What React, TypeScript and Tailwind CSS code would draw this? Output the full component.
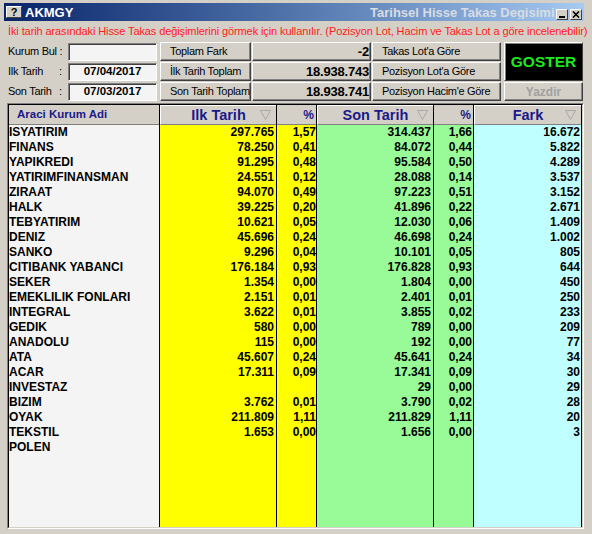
import React from "react";

type Row = [string, string, string, string, string, string];

const rows: Row[] = [
  ["ISYATIRIM", "297.765", "1,57", "314.437", "1,66", "16.672"],
  ["FINANS", "78.250", "0,41", "84.072", "0,44", "5.822"],
  ["YAPIKREDI", "91.295", "0,48", "95.584", "0,50", "4.289"],
  ["YATIRIMFINANSMAN", "24.551", "0,12", "28.088", "0,14", "3.537"],
  ["ZIRAAT", "94.070", "0,49", "97.223", "0,51", "3.152"],
  ["HALK", "39.225", "0,20", "41.896", "0,22", "2.671"],
  ["TEBYATIRIM", "10.621", "0,05", "12.030", "0,06", "1.409"],
  ["DENIZ", "45.696", "0,24", "46.698", "0,24", "1.002"],
  ["SANKO", "9.296", "0,04", "10.101", "0,05", "805"],
  ["CITIBANK YABANCI", "176.184", "0,93", "176.828", "0,93", "644"],
  ["SEKER", "1.354", "0,00", "1.804", "0,00", "450"],
  ["EMEKLILIK FONLARI", "2.151", "0,01", "2.401", "0,01", "250"],
  ["INTEGRAL", "3.622", "0,01", "3.855", "0,02", "233"],
  ["GEDIK", "580", "0,00", "789", "0,00", "209"],
  ["ANADOLU", "115", "0,00", "192", "0,00", "77"],
  ["ATA", "45.607", "0,24", "45.641", "0,24", "34"],
  ["ACAR", "17.311", "0,09", "17.341", "0,09", "30"],
  ["INVESTAZ", "", "", "29", "0,00", "29"],
  ["BIZIM", "3.762", "0,01", "3.790", "0,02", "28"],
  ["OYAK", "211.809", "1,11", "211.829", "1,11", "20"],
  ["TEKSTIL", "1.653", "0,00", "1.656", "0,00", "3"],
  ["POLEN", "", "", "", "", ""],
];

const raised =
  "border border-t-white border-l-white border-b-[#404040] border-r-[#404040] shadow-[inset_-1px_-1px_0_#808080]";
const sunken =
  "border border-t-[#808080] border-l-[#808080] border-b-white border-r-white shadow-[inset_1px_1px_0_#404040]";

function SortArrow() {
  return (
    <svg width="11" height="10" viewBox="0 0 11 10" className="shrink-0">
      <path d="M0.5 0.5 H10.5 L5.5 9.5 Z" fill="none" stroke="#a8a8a8" strokeWidth="1" />
    </svg>
  );
}

function SortHeader({ label }: { label: string }) {
  return (
    <div className="h-[20px] flex items-center border-t border-l border-white border-b border-b-[#808080] bg-[#d4d0c8] relative">
      <span className="flex-1 text-center text-[14.5px] font-bold text-[#1a1a8a] leading-none">{label}</span>
      <span className="absolute right-[5px] top-[4px]">
        <SortArrow />
      </span>
    </div>
  );
}

function PctHeader() {
  return (
    <div className="h-[20px] flex items-center justify-end pr-[2px] bg-[#d4d0c8] border-b border-b-[#808080]">
      <span className="text-[12px] font-bold text-[#1a1a8a]">%</span>
    </div>
  );
}

function Col({
  width,
  bg,
  header,
  idx,
  pr,
  left,
}: {
  width: string;
  bg: string;
  header: React.ReactNode;
  idx: number;
  pr: string;
  left?: boolean;
}) {
  return (
    <div className={`${width} flex flex-col border-r border-black`}>
      {header}
      <div className={`flex-1 ${bg}`}>
        {rows.map((r, i) => (
          <div
            key={i}
            className={`h-[15px] leading-[15px] text-[12px] font-bold whitespace-nowrap overflow-hidden ${left ? "text-left" : `text-right ${pr}`}`}
          >
            {r[idx]}
          </div>
        ))}
      </div>
    </div>
  );
}

export default function App() {
  return (
    <div className="w-[592px] h-[534px] bg-[#d4d0c8] font-['Liberation_Sans',Arial,sans-serif] text-black flex flex-col pl-[4px] pr-[8px] pt-[3px] pb-[5px] overflow-hidden">
      {/* title bar */}
      <div className="h-[18px] flex items-center bg-linear-to-r from-[#0a246a] to-[#a6caf0] pl-[2px] pr-[2px]">
        <div className="w-[16px] h-[12px] bg-[#d4d0c8] border border-t-white border-l-white border-b-[#404040] border-r-[#404040] flex items-center justify-center text-[11px] font-bold leading-none">
          ?
        </div>
        <span className="ml-[3px] text-white text-[13px] font-bold leading-none">AKMGY</span>
        <div className="flex-1" />
        <div className="w-[186px] overflow-hidden whitespace-nowrap text-[13px] font-bold text-[#d8dce4] leading-none">
          Tarihsel Hisse Takas Degisimi
        </div>
        <div className="flex gap-[2px] self-end mb-[1px]">
          <div className="w-[12px] h-[11px] bg-[#d4d0c8] border border-t-white border-l-white border-b-[#404040] border-r-[#404040] flex items-end justify-center pb-[1px]">
            <div className="w-[6px] h-[2px] bg-black" />
          </div>
          <div className="w-[12px] h-[11px] bg-[#d4d0c8] border border-t-white border-l-white border-b-[#404040] border-r-[#404040] flex items-center justify-center">
            <svg width="8" height="7" viewBox="0 0 8 7">
              <path d="M1 0.5 L7 6.5 M7 0.5 L1 6.5" stroke="black" strokeWidth="1.6" />
            </svg>
          </div>
        </div>
      </div>

      {/* info text */}
      <div className="h-[20px] flex items-center pl-[4px] text-[11px] text-[#ff1a1a] whitespace-nowrap tracking-[-0.1px]">
        İki tarih arasındaki Hisse Takas değişimlerini görmek için kullanılır. (Pozisyon Lot, Hacim ve Takas Lot a göre incelenebilir)
      </div>

      {/* controls */}
      <div className="mt-[1px] flex h-[60px] text-[11px] tracking-[-0.3px]">
        <div className="w-[64px] pl-[4px] flex flex-col gap-[1px]">
          <div className="h-[19px] flex items-center">Kurum Bul :</div>
          <div className="h-[19px] flex items-center">
            <span className="w-[51px]">Ilk Tarih</span>:
          </div>
          <div className="h-[19px] flex items-center">
            <span className="w-[51px]">Son Tarih</span>:
          </div>
        </div>
        <div className="w-[89px] flex flex-col gap-[2px] pt-[1px]">
          <div className={`h-[18px] bg-[#f4f4f4] ${sunken}`} />
          <div className={`h-[18px] bg-[#f4f4f4] ${sunken} flex items-center justify-center text-[11.5px] font-bold tracking-normal`}>
            07/04/2017
          </div>
          <div className={`h-[18px] bg-[#f4f4f4] ${sunken} flex items-center justify-center text-[11.5px] font-bold tracking-normal`}>
            07/03/2017
          </div>
        </div>
        <div className="w-[91px] ml-[3px] flex flex-col gap-[1px]">
          {["Toplam Fark", "İlk Tarih Toplam", "Son Tarih Toplam"].map((t) => (
            <div key={t} className={`h-[19px] ${raised} flex items-center pl-[9px] whitespace-nowrap overflow-hidden`}>
              {t}
            </div>
          ))}
        </div>
        <div className="w-[119px] ml-[1px] flex flex-col gap-[1px]">
          {["-2", "18.938.743", "18.938.741"].map((t) => (
            <div key={t} className={`h-[19px] ${raised} flex items-center justify-end pr-[1px] text-[13px] font-bold tracking-[-0.2px]`}>
              {t}
            </div>
          ))}
        </div>
        <div className="w-[129px] ml-[1px] flex flex-col gap-[1px]">
          {["Takas Lot'a Göre", "Pozisyon Lot'a Göre", "Pozisyon Hacim'e Göre"].map((t) => (
            <div key={t} className={`h-[19px] ${raised} flex items-center pl-[9px] whitespace-nowrap`}>
              {t}
            </div>
          ))}
        </div>
        <div className="w-[79px] ml-[3px] flex flex-col gap-[1px]">
          <div className="h-[39px] bg-black border border-t-white border-l-white border-b-[#404040] border-r-[#404040] shadow-[inset_1px_1px_0_#808080] flex items-center justify-center">
            <span className="text-[15.5px] font-bold text-[#1ee81e] tracking-normal">GOSTER</span>
          </div>
          <div className={`h-[19px] ${raised} flex items-center justify-center`}>
            <span className="text-[12px] font-bold text-[#a0a0a0] tracking-normal">Yazdir</span>
          </div>
        </div>
      </div>

      {/* grid */}
      <div className="mt-[1px] ml-[3px] flex-1 border border-t-[#808080] border-l-[#808080] border-b-white border-r-white flex flex-col">
        <div className="flex-1 border border-t-black border-l-black border-b-[#d4d0c8] border-r-[#d4d0c8] flex">
          <Col
            width="w-[151px]"
            bg="bg-[#f4f4f4]"
            idx={0}
            pr=""
            left
            header={
              <div className="h-[20px] flex items-center pl-[8px] bg-[#d4d0c8] border-b border-b-[#808080]">
                <span className="text-[11.5px] font-bold text-[#1a1a8a]">Araci Kurum Adi</span>
              </div>
            }
          />
          <Col width="w-[117px]" bg="bg-[#ffff00]" idx={1} pr="pr-[2px]" header={<SortHeader label="Ilk Tarih" />} />
          <Col width="w-[40px]" bg="bg-[#ffff00]" idx={2} pr="pr-[0px]" header={<PctHeader />} />
          <Col width="w-[117px]" bg="bg-[#98fb98]" idx={3} pr="pr-[2px]" header={<SortHeader label="Son Tarih" />} />
          <Col width="w-[40px]" bg="bg-[#98fb98]" idx={4} pr="pr-[1px]" header={<PctHeader />} />
          <Col width="w-[108px]" bg="bg-[#c0ffff]" idx={5} pr="pr-[1px]" header={<SortHeader label="Fark" />} />
          <div className="flex-1 bg-[#d4d0c8]" />
        </div>
      </div>
    </div>
  );
}
